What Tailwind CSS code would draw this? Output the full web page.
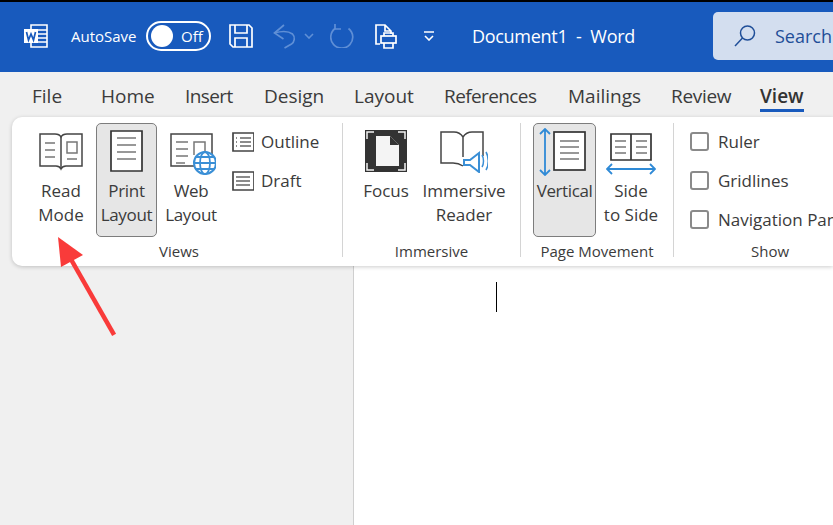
<!DOCTYPE html>
<html lang="en">
<head>
    <meta charset="UTF-8">
    <title>Document1 - Word</title>
    <script src="https://cdn.jsdelivr.net/npm/@tailwindcss/browser@4"></script>
</head>
<body class="relative w-[833px] h-[525px] overflow-hidden bg-[#f0f0f0] font-['Open_Sans','Noto_Sans',sans-serif] text-[#3b3b3b]">
    <!-- title bar -->
    <div class="h-[2px] bg-black"></div>
    <header class="h-[70px] pb-[2px] bg-[#185abd] flex items-center text-white">
        <svg class="ml-[24px] w-[24px] h-[24px]" viewBox="0 0 24 24" fill="none">
            <path d="M7 1h16v22H7z" stroke="#fff" stroke-width="1.6"/>
            <path d="M14 6h9M14 10h9M14 14h9M14 18h9" stroke="#fff" stroke-width="1.6"/>
            <rect x="0" y="5" width="14" height="14" fill="#fff"/>
            <path d="M2.5 8l2 8 2.5-6 2.5 6 2-8" stroke="#185abd" stroke-width="1.7"/>
        </svg>
        <span class="ml-[23px] w-[75px] text-[15px]">AutoSave</span>
        <div class="w-[65px] h-[30px] rounded-full border-2 border-white flex items-center pl-[3px]">
            <span class="w-[22px] h-[22px] rounded-full bg-white"></span>
            <span class="ml-[8px] text-[15px]">Off</span>
        </div>
        <svg class="ml-[18px] w-[24px] h-[24px]" viewBox="0 0 24 24" fill="none" stroke="#fff" stroke-width="1.7">
            <path d="M1 1h19l3 3v19H4l-3-3z"/>
            <path d="M6 1v8h12V1M6 23v-9h12v9"/>
        </svg>
        <svg class="ml-[20px] w-[23px] h-[25px]" viewBox="0 0 23 25" fill="none" stroke="#5f8fd6" stroke-width="1.7">
            <path d="M11 1L1.500 9l9 6"/>
            <path d="M1.500 9c7-2 14-2 18 1 3 3 2 8-1 10l-7 4"/>
        </svg>
        <svg class="ml-[8px] w-[10px] h-[6px]" viewBox="0 0 10 6" fill="none" stroke="#5f8fd6" stroke-width="1.6"><path d="M1 1l4 4 4-4"/></svg>
        <svg class="ml-[16px] w-[24px] h-[24px]" viewBox="0 0 24 24" fill="none" stroke="#5f8fd6" stroke-width="1.700">
            <path d="M5 4.500a11 11 0 1 0 13.500 0"/>
            <path d="M5 0v5h6"/>
        </svg>
        <svg class="ml-[21px] w-[22px] h-[25px]" viewBox="0 0 22 25" fill="none" stroke="#fff" stroke-width="1.7">
            <path d="M5 20H1V1h9l6 6v3M10 1v6h6"/>
            <rect x="6" y="12" width="15" height="7"/>
            <path d="M9 12V9h9v3M9 19v5h9v-5"/>
        </svg>
        <svg class="ml-[26px] w-[12px] h-[10px]" viewBox="0 0 12 10" fill="none" stroke="#fff" stroke-width="1.6"><path d="M1 1h10M2 5l4 4 4-4"/></svg>
        <span class="ml-[37px] w-[241px] text-[18px] tracking-[-0.3px] whitespace-pre">Document1  -  Word</span>
        <div class="w-[120px] h-[48px] rounded-l-[5px] bg-[#d3deef] flex items-center text-[#1f4e98]">
            <svg class="ml-[21px] w-[22px] h-[22px]" viewBox="0 0 22 22" fill="none" stroke="#1f4e98" stroke-width="1.5">
                <circle cx="13.500" cy="8" r="7"/>
                <path d="M8.500 13L1 21"/>
            </svg>
            <span class="ml-[19px] text-[18px]">Search</span>
        </div>
    </header>

    <!-- tabs -->
    <nav class="h-[45px] pl-[32px] pt-[3px] flex items-center text-[19px] whitespace-nowrap">
        <span class="w-[69px]">File</span>
        <span class="w-[84px]">Home</span>
        <span class="w-[79px] tracking-[-0.6px]">Insert</span>
        <span class="w-[90px]">Design</span>
        <span class="w-[90px]">Layout</span>
        <span class="w-[124px] tracking-[-0.6px]">References</span>
        <span class="w-[103px]">Mailings</span>
        <span class="w-[89px] tracking-[-0.3px]">Review</span>
        <span class="relative font-semibold text-[#333]">View<span class="absolute left-0 right-0 top-[27px] h-[3px] bg-[#185abd]"></span></span>
    </nav>

    <!-- ribbon -->
    <section class="relative z-10 ml-[12px] h-[149px] w-[821px] overflow-hidden bg-white rounded-l-[10px] shadow-[0_1px_4px_rgba(0,0,0,0.2)] flex text-[17px] leading-[24px] pt-[6px]">
        <!-- Views -->
        <div class="shrink-0 w-[331px] h-[134px] border-r border-[#d4d4d4] flex flex-col">
            <div class="shrink-0 flex h-[114px]">
                <div class="ml-[16px] w-[66px] flex flex-col items-center">
                    <svg class="mt-[10px] w-[44px] h-[38px]" viewBox="0 0 44 38" fill="none" stroke="#444" stroke-width="1.500">
                        <path d="M1 1h15c3 0 5 1 6 3 1-2 3-3 6-3h15v32H27c-2 0-4 1-5 3-1-2-3-3-5-3H1z"/>
                        <path d="M22 4v32"/>
                        <path d="M6 10h10M6 17h10M6 24h10M28 26h10M28 9h10v11H28z" stroke="#777"/>
                    </svg>
                    <span class="mt-[8px] text-center">Read<br>Mode</span>
                </div>
                <div class="ml-[2px] w-[61px] h-[114px] rounded-[5px] border border-[#7d7d7d] bg-[#e6e6e6] flex flex-col items-center">
                    <svg class="mt-[6px] w-[33px] h-[42px]" viewBox="0 0 33 42" fill="#fff" stroke="#333" stroke-width="1.700">
                        <path d="M1 1h31v40H1z"/>
                        <path d="M7 8h19M7 15h19M7 22h19M7 29h19" stroke="#777" fill="none"/>
                    </svg>
                    <span class="mt-[7px] text-center whitespace-nowrap tracking-[-0.3px]">Print<br>Layout</span>
                </div>
                <div class="w-[68px] flex flex-col items-center">
                    <svg class="mt-[10px] ml-[3px] w-[46px] h-[44px]" viewBox="0 0 46 44" fill="none" stroke="#444" stroke-width="1.500">
                        <path d="M1 1h41v32H1z"/>
                        <path d="M6 9h12M6 16h12M6 23h12M6 30h9M24 22V9h11v12" stroke="#777"/>
                        <circle cx="35" cy="30" r="11" fill="#fff" stroke="#3a8fd6" stroke-width="2"/>
                        <ellipse cx="35" cy="30" rx="5" ry="11" stroke="#3a8fd6" stroke-width="1.800"/>
                        <path d="M24 30h22M26 24h18M26 36h18" stroke="#3a8fd6" stroke-width="1.800"/>
                    </svg>
                    <span class="mt-[2px] text-center whitespace-nowrap tracking-[-0.3px]">Web<br>Layout</span>
                </div>
                <div class="ml-[7px] flex flex-col gap-[15px] pt-[7px]">
                    <div class="flex items-center gap-[7px]">
                        <svg class="w-[22px] h-[20px]" viewBox="0 0 22 20" fill="none" stroke="#444" stroke-width="1.500">
                            <path d="M1 1h21v18H1z" stroke-width="1.700"/>
                            <path d="M4 6h1M8 6h11M4 10h1M8 10h11M4 14h1M8 14h11" stroke="#666"/>
                        </svg>
                        <span>Outline</span>
                    </div>
                    <div class="flex items-center gap-[7px]">
                        <svg class="w-[22px] h-[20px]" viewBox="0 0 22 20" fill="none" stroke="#444" stroke-width="1.500">
                            <path d="M1 1h21v18H1z" stroke-width="1.700"/>
                            <path d="M4 6h14M4 10h14M4 14h14" stroke="#666"/>
                        </svg>
                        <span>Draft</span>
                    </div>
                </div>
            </div>
            <div class="shrink-0 text-[15px] leading-[18px] text-center ml-[4px] mt-[5px]">Views</div>
        </div>

        <!-- Immersive -->
        <div class="shrink-0 w-[178px] h-[134px] border-r border-[#d4d4d4] flex flex-col">
            <div class="shrink-0 flex h-[114px]">
                <div class="ml-[10px] w-[66px] flex flex-col items-center">
                    <svg class="mt-[7px] w-[42px] h-[42px]" viewBox="0 0 42 42">
                        <rect width="42" height="42" fill="#333"/>
                        <path d="M11 6h14l9 9v21H11z" fill="#f4f4f4"/>
                        <path d="M25 6v9h9z" fill="#333"/>
                        <path d="M2 9V2h7M33 2h7v7M2 33v7h7M40 33v7h-7" stroke="#f4f4f4" stroke-width="1.500" fill="none"/>
                    </svg>
                    <span class="mt-[7px]">Focus</span>
                </div>
                <div class="ml-[1px] w-[88px] flex flex-col items-center">
                    <svg class="mt-[8px] w-[48px] h-[42px]" viewBox="0 0 48 42" fill="none" stroke="#444" stroke-width="1.500">
                        <path d="M23 35c-3-2-6-3-10-3H1V1h13c4 0 7 2 9 5 2-3 5-5 9-5h11v24M23 6v20"/>
                        <path d="M24 29h6l9-7v19l-9-7h-6z" stroke="#3a8fd6" stroke-width="2" fill="#fff"/>
                        <path d="M42 24c2 3 2 9 0 12M46 21c3 5 3 13 0 18" stroke="#3a8fd6" stroke-width="1.500"/>
                    </svg>
                    <span class="mt-[6px] text-center whitespace-nowrap">Immersive<br>Reader</span>
                </div>
            </div>
            <div class="shrink-0 text-[15px] leading-[18px] text-center mt-[5px]">Immersive</div>
        </div>

        <!-- Page Movement -->
        <div class="shrink-0 w-[153px] h-[134px] border-r border-[#d4d4d4] flex flex-col">
            <div class="shrink-0 flex h-[114px]">
                <div class="ml-[12px] w-[63px] h-[114px] rounded-[5px] border border-[#7d7d7d] bg-[#e6e6e6] flex flex-col items-center">
                    <svg class="mt-[4px] w-[52px] h-[48px]" viewBox="0 0 52 48" fill="none">
                        <path d="M6 1v46M1 6l5-5 5 5M1 42l5 5 5-5" stroke="#2f8ad6" stroke-width="1.800"/>
                        <rect x="15" y="4" width="31" height="38" fill="#fff" stroke="#333" stroke-width="1.700"/>
                        <path d="M21 13h19M21 19h19M21 25h19M21 31h19" stroke="#777" stroke-width="1.500"/>
                    </svg>
                    <span class="mt-[3px] whitespace-nowrap tracking-[-0.4px]">Vertical</span>
                </div>
                <div class="w-[70px] flex flex-col items-center">
                    <svg class="mt-[10px] w-[50px] h-[43px]" viewBox="0 0 50 43" fill="none">
                        <path d="M5 1h40v26H5zM25 1v26" stroke="#333" stroke-width="1.700"/>
                        <path d="M9 8h11M9 14h11M9 20h11M30 8h11M30 14h11M30 20h11" stroke="#777" stroke-width="1.500"/>
                        <path d="M1 36h48M6 31l-5 5 5 5M44 31l5 5-5 5" stroke="#2f8ad6" stroke-width="1.800"/>
                    </svg>
                    <span class="mt-[3px] text-center whitespace-nowrap">Side<br>to Side</span>
                </div>
            </div>
            <div class="shrink-0 text-[15px] leading-[18px] text-center mt-[5px]">Page Movement</div>
        </div>

        <!-- Show -->
        <div class="shrink-0 w-[192px] h-[134px] flex flex-col">
            <div class="shrink-0 h-[114px] ml-[16px] pt-[9px] flex flex-col gap-[20px]">
                <label class="flex items-center gap-[9px] h-[19px]"><span class="w-[19px] h-[19px] rounded-[3px] border-2 border-[#8a8a8a]"></span>Ruler</label>
                <label class="flex items-center gap-[9px] h-[19px]"><span class="w-[19px] h-[19px] rounded-[3px] border-2 border-[#8a8a8a]"></span>Gridlines</label>
                <label class="flex items-center gap-[9px] h-[19px] whitespace-nowrap"><span class="w-[19px] h-[19px] rounded-[3px] border-2 border-[#8a8a8a]"></span>Navigation Pane</label>
            </div>
            <div class="shrink-0 text-[15px] leading-[18px] text-center mt-[5px]">Show</div>
        </div>
    </section>

    <!-- document area -->
    <main class="absolute left-[353px] top-[262px] w-[480px] h-[263px] bg-white border-l border-[#cfcfcf]">
        <div class="ml-[142px] mt-[20px] w-[1px] h-[30px] bg-black"></div>
    </main>

    <!-- red arrow -->
    <svg class="absolute z-20 left-[50px] top-[230px] w-[80px] h-[110px]" viewBox="0 0 80 110" fill="none">
        <path d="M22 31L63 103" stroke="#f93b3a" stroke-width="4.500" stroke-linecap="square"/>
        <path d="M8 7l25 18-22 12z" fill="#f93b3a"/>
    </svg>
</body>
</html>
